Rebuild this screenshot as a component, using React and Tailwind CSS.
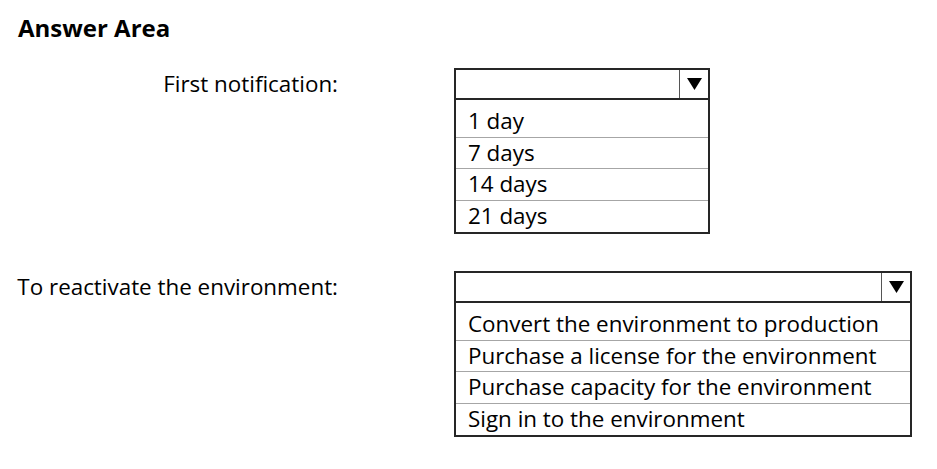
import React from 'react';

const Arrow = () => (
  <svg width="15" height="12" viewBox="0 0 15 12">
    <polygon points="0,0 15,0 7.5,12" fill="#000" />
  </svg>
);

function Dropdown({ width, options }) {
  return (
    <div className={`${width} border-2 border-[#262626] bg-white`}>
      {/* header with arrow button */}
      <div className="flex h-[30px] border-b-2 border-[#262626]">
        <div className="flex-1" />
        <div className="flex w-[29px] items-center justify-center border-l border-[#555]">
          <Arrow />
        </div>
      </div>
      <div className="pt-[6px]">
        {options.map((opt, i) => (
          <div
            key={opt}
            className={`flex h-[31.5px] items-center pl-[12px] text-[22.4px] leading-none ${i < options.length - 1 ? 'border-b border-[#a6a6a6]' : ''}`}
          >
            {opt}
          </div>
        ))}
      </div>
    </div>
  );
}

export default function App() {
  return (
    <div className="h-[469px] w-[937px] bg-white px-[18px] pt-[12px] text-black" style={{ fontFamily: '"Open Sans", Lato, sans-serif' }}>
      <h1 className="text-[24px] font-bold leading-[32px]">Answer Area</h1>

      <div className="mt-[24px] flex items-start">
        <div className="flex h-[32px] w-[320px] shrink-0 items-center justify-end whitespace-nowrap text-[22.4px]">First notification:</div>
        <div className="ml-[116px]">
          <Dropdown width="w-[256px]" options={['1 day', '7 days', '14 days', '21 days']} />
        </div>
      </div>

      <div className="mt-[37px] flex items-start">
        <div className="flex h-[32px] w-[320px] shrink-0 items-center justify-end whitespace-nowrap text-[22.4px]">To reactivate the environment:</div>
        <div className="ml-[116px]">
          <Dropdown
            width="w-[458px]"
            options={[
              'Convert the environment to production',
              'Purchase a license for the environment',
              'Purchase capacity for the environment',
              'Sign in to the environment',
            ]}
          />
        </div>
      </div>
    </div>
  );
}
